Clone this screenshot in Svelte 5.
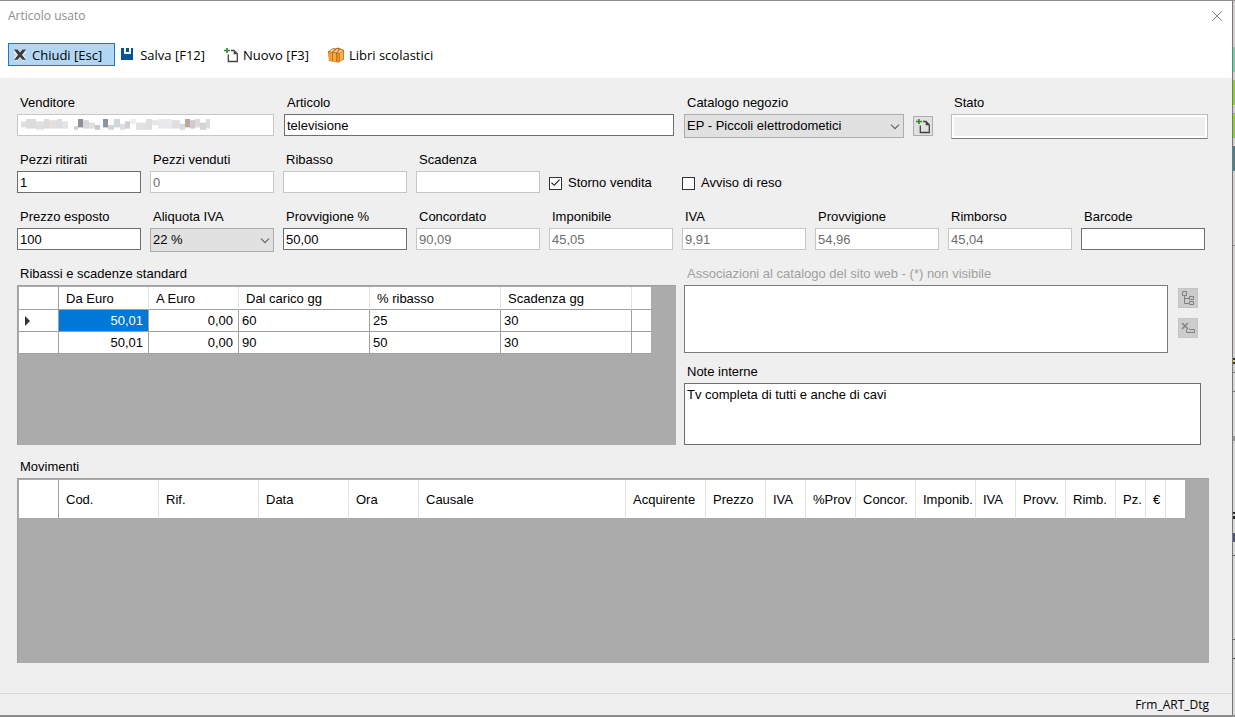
<script lang="ts">
	type Field = {
		id: string;
		label: string;
		value: string;
		disabled?: boolean;
	};

	let pieces: Field[] = $state([
		{ id: 'ritirati', label: 'Pezzi ritirati', value: '1' },
		{ id: 'venduti', label: 'Pezzi venduti', value: '0', disabled: true },
		{ id: 'ribasso', label: 'Ribasso', value: '', disabled: true },
		{ id: 'scadenza', label: 'Scadenza', value: '', disabled: true }
	]);

	let prices: Field[] = $state([
		{ id: 'provv-perc', label: 'Provvigione %', value: '50,00' },
		{ id: 'concordato', label: 'Concordato', value: '90,09', disabled: true },
		{ id: 'imponibile', label: 'Imponibile', value: '45,05', disabled: true },
		{ id: 'iva', label: 'IVA', value: '9,91', disabled: true },
		{ id: 'provvigione', label: 'Provvigione', value: '54,96', disabled: true },
		{ id: 'rimborso', label: 'Rimborso', value: '45,04', disabled: true },
		{ id: 'barcode', label: 'Barcode', value: '' }
	]);

	let articolo = $state('televisione');
	let prezzo = $state('100');
	let storno = $state(true);
	let avviso = $state(false);
	let note = $state('Tv completa di tutti e anche di cavi');

	const discounts = [
		{ from: '50,01', to: '0,00', days: '60', discount: '25', expiry: '30' },
		{ from: '50,01', to: '0,00', days: '90', discount: '50', expiry: '30' }
	];

	const discountColumns = [
		{ label: 'Da Euro', width: 90 },
		{ label: 'A Euro', width: 90 },
		{ label: 'Dal carico gg', width: 131 },
		{ label: '% ribasso', width: 131 },
		{ label: 'Scadenza gg', width: 131 },
		{ label: '', width: 20 }
	];

	const movementColumns = [
		{ label: 'Cod.', width: 100 },
		{ label: 'Rif.', width: 100 },
		{ label: 'Data', width: 90 },
		{ label: 'Ora', width: 70 },
		{ label: 'Causale', width: 207 },
		{ label: 'Acquirente', width: 80 },
		{ label: 'Prezzo', width: 60 },
		{ label: 'IVA', width: 40 },
		{ label: '%Prov', width: 50 },
		{ label: 'Concor.', width: 60 },
		{ label: 'Imponib.', width: 60 },
		{ label: 'IVA', width: 40 },
		{ label: 'Provv.', width: 50 },
		{ label: 'Rimb.', width: 50 },
		{ label: 'Pz.', width: 30 },
		{ label: '€', width: 20 },
		{ label: '', width: 20 }
	];

	// Pixelated seller name: x, y, width, height, colour
	const mosaic: [number, number, number, number, string][] = [
		[0, 2, 5, 5, '#e0e0e0'],
		[5, 0, 10, 8, '#dcdcdf'],
		[15, 2, 8, 7, '#e0dfe2'],
		[23, 0, 5, 8, '#dcdcdc'],
		[28, 1, 8, 7, '#e4dfdc'],
		[36, 0, 5, 8, '#dcdfe2'],
		[41, 2, 6, 6, '#e6e2e0'],
		[53, 6, 4, 3, '#d0d0d0'],
		[57, 0, 5, 7, '#8f8f9b'],
		[62, 1, 6, 7, '#dad5d8'],
		[68, 3, 6, 5, '#dedede'],
		[74, 5, 5, 4, '#c8c8cc'],
		[82, 0, 5, 7, '#8d95a5'],
		[87, 5, 6, 4, '#d4d4d4'],
		[93, 0, 6, 7, '#d0d6da'],
		[99, 4, 5, 5, '#dedede'],
		[104, 2, 5, 6, '#d2cdd0'],
		[109, 0, 6, 4, '#eeeeee'],
		[115, 3, 10, 6, '#e0e1e4'],
		[125, 0, 6, 9, '#dcdee0'],
		[131, 1, 6, 4, '#e6e6e6'],
		[137, 0, 14, 8, '#e9e9ec'],
		[151, 1, 8, 7, '#dedee0'],
		[159, 4, 5, 5, '#dadada'],
		[164, 0, 5, 7, '#bca79d'],
		[169, 1, 5, 7, '#cfc9d0'],
		[174, 0, 5, 7, '#dfd8d4'],
		[179, 3, 6, 6, '#d4d4d8'],
		[185, 0, 4, 8, '#dcdcdc']
	];
</script>

{#snippet newDocIcon()}
	<svg width="14" height="16" viewBox="0 0 14 16" aria-hidden="true">
		<path d="M3 1v5M0 3.500h6" stroke="#388a34" stroke-width="1.700" />
		<path d="M7 3.500h3l3.300 3.300v7.700h-9v-7" stroke="#424242" stroke-width="1.300" fill="none" />
		<path d="M9.700 3.500v3.700h3.600z" fill="#424242" />
	</svg>
{/snippet}

{#snippet chevron()}
	<svg class="chevron" width="10" height="6" viewBox="0 0 10 6" aria-hidden="true">
		<path d="M1 .7l4 4 4-4" fill="none" stroke="#606060" stroke-width="1.100" />
	</svg>
{/snippet}

{#snippet textField(field: Field)}
	<div class="field">
		<label for={field.id}>{field.label}</label>
		<input id={field.id} type="text" bind:value={field.value} disabled={field.disabled} />
	</div>
{/snippet}

<div class="desktop">
	<div class="window">
		<header class="titlebar">
			<h1>Articolo usato</h1>
			<button type="button" class="close" aria-label="Chiudi finestra">
				<svg width="10" height="10" viewBox="0 0 10 10" aria-hidden="true">
					<path d="M0 0l10 10M10 0L0 10" stroke="#888" stroke-width="1" />
				</svg>
			</button>
		</header>

		<nav class="toolbar">
			<button type="button" class="active">
				<svg width="14" height="14" viewBox="0 0 14 14" aria-hidden="true">
					<path d="M2 2.500L12 11.500M12 2.500L2 11.500" stroke="#e6eef5" stroke-width="4.500" />
					<path d="M1 1.500h3.500l2.500 3 2.500-3H13L9 7l4 4.700H9.500L7 9 4.500 11.700H1L5 7z" fill="#3c3c3c" />
				</svg>
				Chiudi [Esc]
			</button>
			<button type="button">
				<svg width="14" height="14" viewBox="0 0 14 14" aria-hidden="true">
					<path d="M0 0h3v6h7V0h2v12H0z" fill="#00539c" />
					<path d="M5 0h3v4H5z" fill="#00539c" />
				</svg>
				Salva [F12]
			</button>
			<button type="button">
				{@render newDocIcon()}
				Nuovo [F3]
			</button>
			<button type="button">
				<svg width="16" height="16" viewBox="0 0 16 16" aria-hidden="true">
					<path d="M0 4.500L5 1l2.500.5L10 .5l6 2.500v9.500l-5.500 3L1 14z" fill="#b8691c" />
					<path d="M.8 5l3.400.8v8.600L1.200 13.600z" fill="#f5a030" />
					<path d="M5 5.800l3.200.6v8.700L5 14.500z" fill="#f9a938" />
					<path d="M9 6.500h2v8.700H9z" fill="#e78a20" />
					<path d="M11.600 6.300L15.300 4v8.200l-3.700 2.400z" fill="#fbb24a" />
					<path d="M1.200 4.300L5 1.700l1.700.4L4 4.900zM5.200 5l4-3 1.500.5-2.500 3zM9.300 5.700L12 2.500l3 .9-3.500 2.400z" fill="#f3d3a0" />
				</svg>
				Libri scolastici
			</button>
		</nav>

		<main>
			<div class="row-main">
				<div class="field">
					<label for="venditore">Venditore</label>
					<div class="overlay">
						<input id="venditore" type="text" disabled />
						<svg
							class="mosaic"
							width="190"
							height="12"
							viewBox="0 0 190 10"
							preserveAspectRatio="none"
							aria-hidden="true"
						>
							{#each mosaic as [x, y, width, height, fill]}
								<rect {x} {y} {width} {height} {fill} />
							{/each}
						</svg>
					</div>
				</div>
				<div class="field">
					<label for="articolo">Articolo</label>
					<input id="articolo" type="text" bind:value={articolo} />
				</div>
				<div class="field">
					<label for="catalogo">Catalogo negozio</label>
					<div class="catalog">
						<div class="overlay">
							<select id="catalogo">
								<option>EP - Piccoli elettrodometici</option>
							</select>
							{@render chevron()}
						</div>
						<button type="button" class="square" aria-label="Nuovo catalogo">
							{@render newDocIcon()}
						</button>
					</div>
				</div>
				<div class="field">
					<label for="stato">Stato</label>
					<input id="stato" class="status" type="text" readonly />
				</div>
			</div>

			<div class="row-fields">
				{#each pieces as field (field.id)}
					{@render textField(field)}
				{/each}
				<label class="check"><input type="checkbox" bind:checked={storno} />Storno vendita</label>
				<label class="check"><input type="checkbox" bind:checked={avviso} />Avviso di reso</label>
			</div>

			<div class="row-fields">
				<div class="field">
					<label for="prezzo">Prezzo esposto</label>
					<input id="prezzo" type="text" bind:value={prezzo} />
				</div>
				<div class="field">
					<label for="aliquota">Aliquota IVA</label>
					<div class="overlay">
						<select id="aliquota">
							<option>22 %</option>
						</select>
						{@render chevron()}
					</div>
				</div>
				{#each prices as field (field.id)}
					{@render textField(field)}
				{/each}
			</div>

			<div class="row-details">
				<section class="field">
					<h2>Ribassi e scadenze standard</h2>
					<div class="datagrid">
						<table>
							<colgroup>
								<col class="selector" />
								{#each discountColumns as column}
									<col style:width="{column.width}px" />
								{/each}
							</colgroup>
							<thead>
								<tr>
									<th></th>
									{#each discountColumns as column}
										<th>{column.label}</th>
									{/each}
								</tr>
							</thead>
							<tbody>
								{#each discounts as row, i}
									<tr>
										<td class="marker">
											{#if i === 0}
												<svg width="5" height="10" viewBox="0 0 5 10" aria-hidden="true">
													<path d="M0 0l5 5-5 5z" fill="#333" />
												</svg>
											{/if}
										</td>
										<td class="number" class:selected={i === 0}>{row.from}</td>
										<td class="number">{row.to}</td>
										<td>{row.days}</td>
										<td>{row.discount}</td>
										<td>{row.expiry}</td>
										<td></td>
									</tr>
								{/each}
							</tbody>
						</table>
					</div>
				</section>

				<div class="side">
					<div class="field">
						<label for="associazioni" class="muted">
							Associazioni al catalogo del sito web - (*) non visibile
						</label>
						<div class="associations">
							<select id="associazioni" class="listbox" multiple></select>
							<div class="actions">
								<button type="button" class="square" disabled aria-label="Apri albero">
									<svg width="14" height="14" viewBox="0 0 14 14" aria-hidden="true">
										<g fill="none" stroke="#808080">
											<path d="M1.500.5h4v4h-4zM3.500 4.500v8h5M3.500 7.500h5" />
											<path d="M8.500 5.500h4v3h-4zM8.500 10.500h4v3h-4z" />
										</g>
									</svg>
								</button>
								<button type="button" class="square" disabled aria-label="Rimuovi">
									<svg width="14" height="14" viewBox="0 0 14 14" aria-hidden="true">
										<g fill="none" stroke="#808080">
											<path d="M1 2l6 6M7 2L1 8" stroke-width="1.500" />
											<path d="M5.500 8.500v3h8v-3H8" />
										</g>
									</svg>
								</button>
							</div>
						</div>
					</div>
					<div class="field">
						<label for="note">Note interne</label>
						<textarea id="note" bind:value={note}></textarea>
					</div>
				</div>
			</div>

			<section class="field movements">
				<h2>Movimenti</h2>
				<div class="datagrid">
					<table class="tall">
						<colgroup>
							<col class="selector" />
							{#each movementColumns as column}
								<col style:width="{column.width}px" />
							{/each}
						</colgroup>
						<thead>
							<tr>
								<th></th>
								{#each movementColumns as column}
									<th>{column.label}</th>
								{/each}
							</tr>
						</thead>
					</table>
				</div>
			</section>
		</main>

		<footer>Frm_ART_Dtg</footer>
	</div>
	<div class="behind"></div>
</div>

<style>
	:global(body) {
		background: #8f8c8c;
	}

	.desktop {
		display: flex;
		box-sizing: border-box;
		min-height: 100vh;
		padding: 1px 0 2px;
		background: #8f8c8c;
		font: 13px/20px 'Liberation Sans', Arial, sans-serif;
		color: #000;
	}

	.desktop :is(input, select, textarea, button) {
		box-sizing: border-box;
		margin: 0;
		border-radius: 0;
		font: inherit;
		color: inherit;
	}

	.window {
		display: flex;
		flex: 1;
		flex-direction: column;
		min-width: 0;
		border-right: 1px solid #777;
		background: #efefef;
	}

	/* Slice of the window that lies behind this one */
	.behind {
		width: 2px;
		background: linear-gradient(
			#d2d0d1 46px,
			#6fd3b0 46px 71px,
			#d2d0d1 71px 79px,
			#8cd22a 79px 104px,
			#d2d0d1 104px 112px,
			#8cd22a 112px 137px,
			#d2d0d1 137px 145px,
			#4a8088 145px 170px,
			#d2d0d1 170px 244px,
			#888 244px 245px,
			#d2d0d1 245px 357px,
			#333 357px 359px,
			#d2c98a 359px 361px,
			#333 361px 363px,
			#d2d0d1 363px 371px,
			#777 371px 372px,
			#d8d8d8 372px 390px,
			#777 390px 391px,
			#d8d8d8 391px 435px,
			#999 435px 440px,
			#d8d8d8 440px 511px,
			#222 511px 513px,
			#d8d8d8 513px 515px,
			#222 515px 518px,
			#d8d8d8 518px 532px,
			#557 532px 541px,
			#d8d8d8 541px 554px,
			#555 554px 555px,
			#d8d8d8 555px 638px,
			#666 638px 639px,
			#d8d8d8 639px 657px,
			#444 657px 658px,
			#d8d8d8 658px
		);
	}

	.titlebar {
		display: flex;
		align-items: center;
		justify-content: space-between;
		height: 30px;
		padding: 0 10px 0 8px;
		background: #fff;
	}

	h1 {
		margin: 0;
		font: 12px/20px 'Open Sans', 'Noto Sans', sans-serif;
		color: #8c8c8c;
	}

	.close {
		display: flex;
		padding: 0;
		border: 0;
		background: none;
	}

	.toolbar {
		display: flex;
		align-items: flex-start;
		gap: 1px;
		padding: 12px 8px;
		background: #fff;
		font: 13px/20px 'Open Sans', 'Noto Sans', sans-serif;
	}

	.toolbar button {
		display: flex;
		align-items: center;
		gap: 5px;
		padding: 1px 12px 0 4px;
		border: 1px solid transparent;
		background: none;
		white-space: nowrap;
	}

	.toolbar .active {
		border-color: #1b7ac4;
		background: #b3d7f3;
	}

	main {
		display: flex;
		flex: 1;
		flex-direction: column;
		padding: 15px 23px 30px 17px;
	}

	.row-main {
		display: grid;
		grid-template-columns: 257fr 390fr 257fr 257fr;
		gap: 10px;
		height: 57px;
		padding-right: 1px;
	}

	.row-fields {
		display: grid;
		grid-template-columns: repeat(9, 1fr);
		gap: 9px;
		height: 57px;
		padding-right: 4px;
	}

	.row-details {
		display: grid;
		grid-template-columns: 659fr 525fr;
		gap: 8px;
		margin-bottom: 12px;
	}

	.field {
		display: flex;
		flex-direction: column;
		gap: 1px;
		min-width: 0;
	}

	.field > label,
	h2 {
		margin: 0;
		padding-left: 3px;
		font-size: 13px;
		font-weight: normal;
		white-space: nowrap;
	}

	.field > .muted {
		color: #a0a0a0;
	}

	input[type='text'] {
		width: 100%;
		height: 22px;
		padding: 0 2px;
		border: 1px solid #6e6e6e;
		background: #fff;
	}

	input[type='text']:disabled {
		border-color: #c6c6c6;
		color: #6d6d6d;
	}

	input.status[type='text'] {
		height: 25px;
		border-color: #bdbdbd #bdbdbd #7a7a7a;
		background: #efefef;
		box-shadow: inset 0 0 0 2px #fff;
	}

	.overlay {
		position: relative;
		flex: 1;
		min-width: 0;
	}

	.mosaic {
		position: absolute;
		top: 5px;
		left: 4px;
	}

	select {
		display: block;
		width: 100%;
		height: 24px;
		padding: 0 24px 0 2px;
		border: 1px solid #adadad;
		background: #e1e1e1;
		appearance: none;
	}

	.chevron {
		position: absolute;
		top: 10px;
		right: 4px;
		pointer-events: none;
	}

	.catalog {
		display: flex;
		align-items: center;
		gap: 9px;
		padding-right: 8px;
	}

	.square {
		display: flex;
		align-items: center;
		justify-content: center;
		width: 20px;
		height: 20px;
		padding: 0;
		border: 1px solid #adadad;
		background: #e1e1e1;
	}

	.square:disabled {
		border-color: #c4c4c4;
		background: #cccccc;
	}

	.check {
		display: flex;
		align-items: center;
		gap: 6px;
		height: 20px;
		padding-top: 23px;
		white-space: nowrap;
	}

	.check input {
		display: grid;
		place-items: center;
		width: 13px;
		height: 13px;
		border: 1px solid #333;
		background: #fff;
		appearance: none;
	}

	.check input:checked::before {
		content: '';
		width: 9px;
		height: 8px;
		background: #222;
		clip-path: polygon(0 50%, 10% 40%, 36% 70%, 90% 4%, 100% 12%, 36% 88%);
	}

	.datagrid {
		box-sizing: border-box;
		flex: 1;
		overflow: hidden;
		padding: 1px;
		border: 1px solid #a0a0a0;
		border-width: 1px 0 0 1px;
		background: #ababab;
	}

	table {
		border-collapse: separate;
		border-spacing: 0;
		table-layout: fixed;
		width: 0;
		background: #fff;
	}

	.selector {
		width: 40px;
	}

	th,
	td {
		box-sizing: border-box;
		height: 22px;
		padding: 1px 3px 0;
		border: solid #a0a0a0;
		border-width: 0 1px 1px 0;
		line-height: 20px;
		text-align: left;
		white-space: nowrap;
		overflow: hidden;
	}

	th {
		height: 23px;
		padding: 1px 0 0 7px;
		border-right-color: #e2e2e2;
		font-weight: normal;
	}

	th:first-child {
		border-right-color: #a0a0a0;
	}

	th:last-child,
	td:last-child {
		border-right-color: #ababab;
	}

	.tall th {
		height: 39px;
		border-bottom-color: #ababab;
	}

	.marker {
		padding-left: 6px;
	}

	.marker svg {
		display: block;
	}

	td.number {
		padding-right: 5px;
		text-align: right;
	}

	.selected {
		background: #0078d7;
		color: #fff;
	}

	.side {
		display: flex;
		flex-direction: column;
		gap: 9px;
		padding-right: 8px;
	}

	.associations {
		display: flex;
		gap: 10px;
		padding-right: 3px;
	}

	.listbox {
		flex: 1;
		height: 68px;
		border-color: #7a7a7a;
		background: #fff;
		overflow: hidden;
	}

	.actions {
		display: flex;
		flex-direction: column;
		gap: 10px;
		padding-top: 3px;
	}

	textarea {
		display: block;
		width: 100%;
		height: 62px;
		padding: 1px 2px;
		border: 1px solid #6e6e6e;
		background: #fff;
		resize: none;
	}

	.movements {
		flex: 1;
	}

	footer {
		padding: 1px 23px 0;
		border-top: 1px solid #d7d7d7;
		font: 12px/20px 'Open Sans', 'Noto Sans', sans-serif;
		text-align: right;
	}
</style>
